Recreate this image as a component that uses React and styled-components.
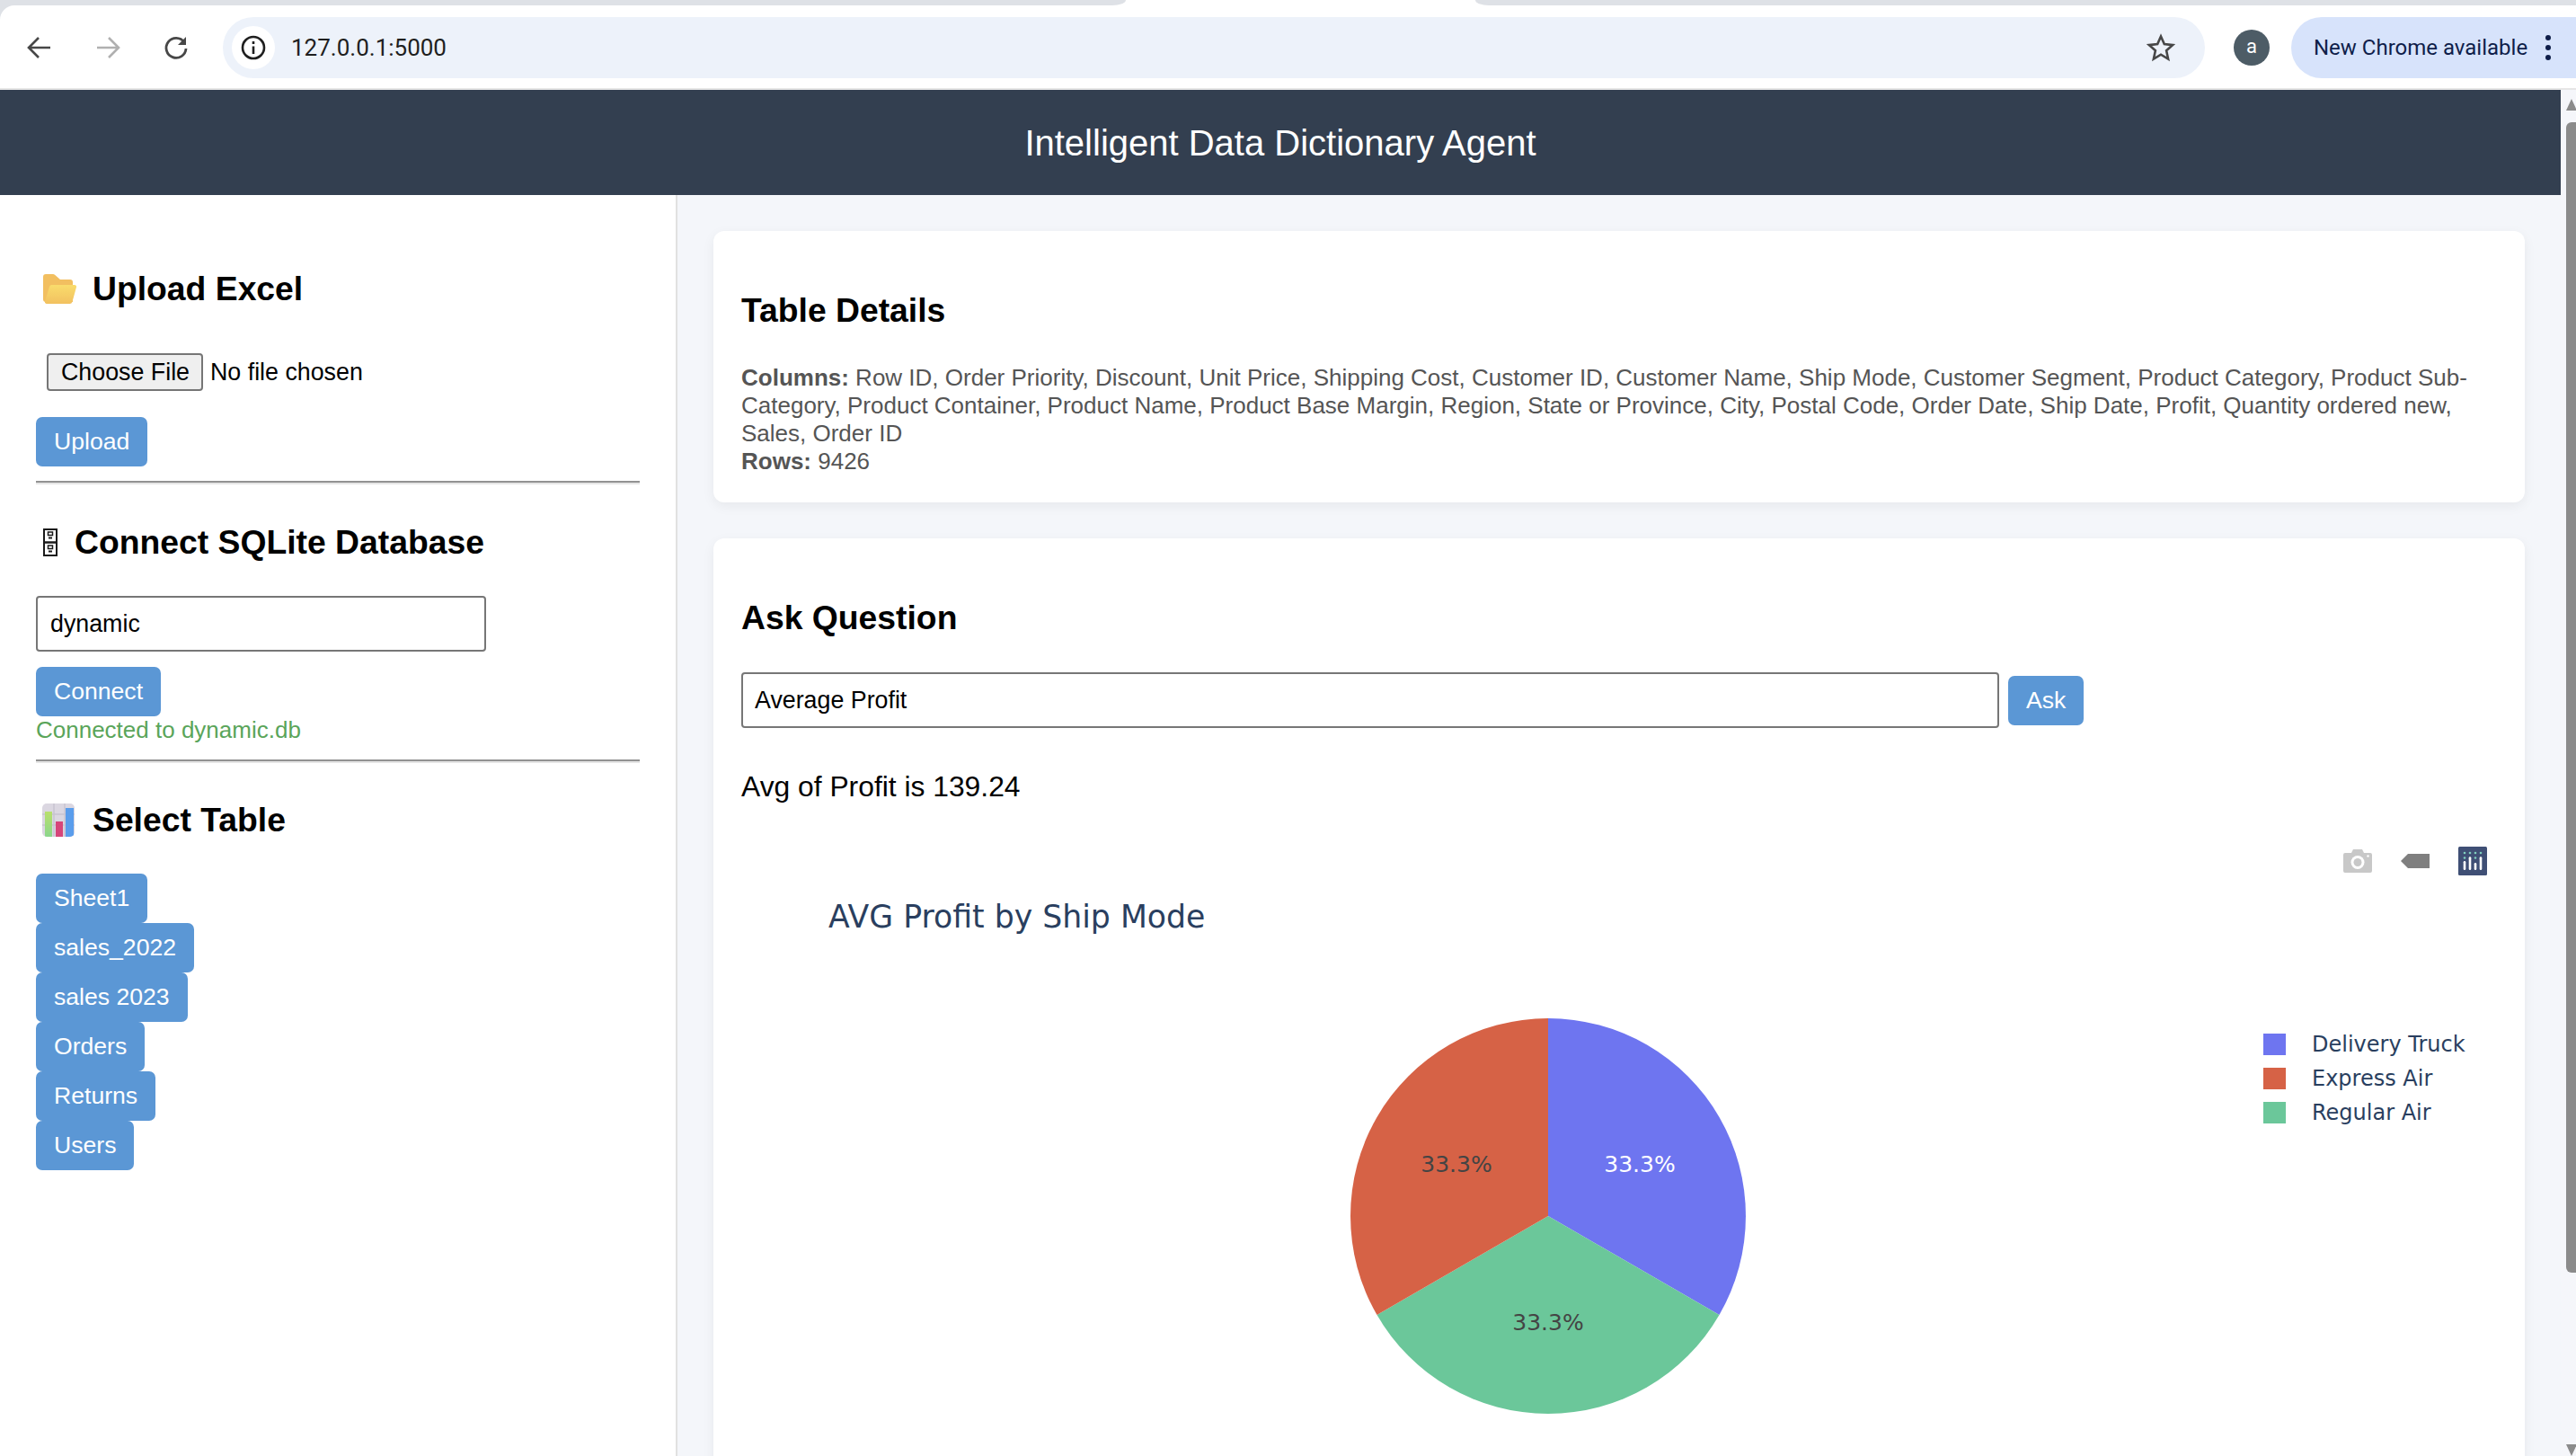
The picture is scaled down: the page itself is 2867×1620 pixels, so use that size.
import styled, { createGlobalStyle } from "styled-components";

const GlobalStyle = createGlobalStyle`
  html, body {
    margin: 0;
    height: 1620px;
    overflow: hidden;
    background: #fff;
    font-family: "Liberation Sans", Arial, sans-serif;
  }
  * { box-sizing: border-box; }
`;

const Browser = styled.div`
  width: 2867px;
  height: 1620px;
  overflow: hidden;
  display: flex;
  flex-direction: column;
  background: #dee1e6;
`;
const TabStrip = styled.div`
  height: 6px;
  flex: none;
  background: #fff;
  display: flex;
  justify-content: space-between;
`;
const TabGap = styled.div`
  width: ${(p) => p.$w}px;
  background: #dee1e6;
  border-bottom-left-radius: ${(p) => (p.$right ? "15px 6px" : "0")};
  border-bottom-right-radius: ${(p) => (p.$right ? "0" : "15px 6px")};
`;
const Toolbar = styled.div`
  height: 94px;
  flex: none;
  background: #fff;
  border-bottom: 2px solid #e6e6e6;
  padding: 12px 0 10px 6px;
  display: flex;
  align-items: center;
  border-top-left-radius: 16px;
`;
const NavButton = styled.div`
  width: 76px;
  flex: none;
  display: flex;
  justify-content: center;
  color: ${(p) => (p.$off ? "#b0b0b0" : "#474747")};
`;
const Omnibox = styled.div`
  margin-left: 14px;
  width: 2206px;
  height: 68px;
  flex: none;
  border-radius: 34px;
  background: #edf2fa;
  display: flex;
  align-items: center;
  padding: 0 33px 0 10px;
`;
const SiteInfo = styled.div`
  width: 48px;
  height: 48px;
  border-radius: 50%;
  background: #fff;
  display: flex;
  align-items: center;
  justify-content: center;
  color: #1f1f1f;
`;
const Url = styled.span`
  margin-left: 18px;
  font-family: Roboto, sans-serif;
  font-size: 26px;
  color: #1f1f1f;
  flex: 1;
`;
const Avatar = styled.div`
  width: 40px;
  height: 40px;
  flex: none;
  margin-left: 32px;
  border-radius: 50%;
  background: #4d5c66;
  color: #fff;
  font-family: Roboto, sans-serif;
  font-size: 22px;
  display: flex;
  align-items: center;
  justify-content: center;
  padding-bottom: 3px;
`;
const UpdatePill = styled.div`
  margin-left: 24px;
  flex: 1;
  height: 68px;
  border-radius: 34px 0 0 34px;
  background: #d7e3fb;
  color: #0f1e4a;
  font-family: Roboto, sans-serif;
  font-size: 24px;
  display: flex;
  align-items: center;
  padding-left: 25px;
  white-space: nowrap;
`;
const Dots = styled.span`
  margin-left: 20px;
  display: flex;
  flex-direction: column;
  gap: 5px;
  i {
    width: 6px;
    height: 6px;
    border-radius: 50%;
    background: #0f1e4a;
  }
`;
const Viewport = styled.div`
  flex: 1;
  min-height: 0;
  display: flex;
  background: #f4f6fa;
`;
const Page = styled.div`
  flex: 1;
  min-width: 0;
  display: flex;
  flex-direction: column;
`;
const Scrollbar = styled.div`
  width: 17px;
  flex: none;
  background: #f5f6fa;
  padding: 10px 0 0 6px;
  display: flex;
  flex-direction: column;
  align-items: stretch;
`;
const ScrollArrow = styled.div`
  flex: none;
  width: 0;
  height: 0;
  margin-top: ${(p) => (p.$down ? "auto" : "0")};
  border-left: 6px solid transparent;
  border-right: 6px solid transparent;
  border-bottom: ${(p) => (p.$down ? "0" : "13px solid #8b8b8b")};
  border-top: ${(p) => (p.$down ? "13px solid #8b8b8b" : "0")};
`;
const ScrollThumb = styled.div`
  margin-top: 13px;
  height: 1280px;
  background: #8b8b8b;
  border-radius: 6px 0 0 6px;
`;
const Banner = styled.header`
  height: 117px;
  flex: none;
  background: #333f50;
  color: #fff;
  font-size: 40px;
  display: flex;
  align-items: center;
  justify-content: center;
  padding-top: 1px;
`;
const Body = styled.div`
  flex: 1;
  min-height: 0;
  display: flex;
`;
const Sidebar = styled.aside`
  width: 754px;
  flex: none;
  background: #fff;
  border-right: 2px solid #e1e1e1;
  padding: 0 40px;
`;
const SideTitle = styled.h3`
  margin: 0;
  height: ${(p) => p.$h}px;
  padding-top: ${(p) => p.$pad}px;
  padding-left: ${(p) => p.$left}px;
  display: flex;
  align-items: center;
  gap: ${(p) => p.$gap}px;
  font-size: 37.3px;
  font-weight: 700;
  color: #000;
`;
const FileField = styled.input`
  display: block;
  margin: 0 0 29px 12px;
  font-family: "Liberation Sans", sans-serif;
  font-size: 26.8px;
  height: 42px;
  color: #000;
  &::file-selector-button {
    height: 42px;
    margin: 0 8px 0 0;
    padding: 0 13px 0 14px;
    font: inherit;
    background: #efefef;
    border: 2px solid #767676;
    border-radius: 4px;
    color: #000;
  }
`;
const ActionButton = styled.button`
  display: ${(p) => (p.$stack ? "block" : "inline-block")};
  height: 55px;
  padding: 0 20px;
  border: 0;
  border-radius: 7px;
  background: #5b97d5;
  color: #fff;
  font-family: "Liberation Sans", sans-serif;
  font-size: 26.6px;
`;
const Rule = styled.hr`
  margin: ${(p) => p.$top}px 0 0;
  height: 4px;
  border: 0;
  border-top: 2px solid #929292;
  border-bottom: 2px solid #e6e6e6;
`;
const TextBox = styled.input`
  display: block;
  flex: none;
  height: 62px;
  margin-bottom: ${(p) => p.$below || 0}px;
  padding: 0 ${(p) => p.$inset}px;
  border: 2px solid #767676;
  border-radius: 4px;
  background: #fff;
  color: #000;
  font-family: "Liberation Sans", sans-serif;
  font-size: 26.8px;
  width: ${(p) => p.$w}px;
`;
const StatusText = styled.div`
  height: 31px;
  line-height: 31px;
  color: #5aa55a;
  font-size: 26px;
`;
const TableList = styled.div`
  display: flex;
  flex-direction: column;
  align-items: flex-start;
`;
const Main = styled.main`
  flex: 1;
  min-width: 0;
  padding: 40px 40px 0;
  display: flex;
  flex-direction: column;
  gap: 40px;
`;
const Card = styled.section`
  flex: none;
  background: #fff;
  border-radius: 12px;
  box-shadow: 0 4px 14px rgba(0, 0, 0, 0.06);
  padding: 0 31px;
  height: ${(p) => p.$h}px;
`;
const CardTitle = styled.h3`
  margin: 0;
  padding-top: ${(p) => p.$top}px;
  height: ${(p) => p.$h}px;
  font-size: 37.3px;
  line-height: 44px;
  font-weight: 700;
  color: #000;
`;
const Details = styled.p`
  margin: 0;
  font-size: 26px;
  line-height: 31px;
  color: #555;
`;
const AskRow = styled.div`
  display: flex;
  align-items: center;
  gap: 10px;
`;
const Answer = styled.p`
  margin: 45px 0 0;
  font-size: 31.8px;
  line-height: 40px;
  color: #000;
`;
const Plot = styled.div`
  position: relative;
  margin: 24px 0 0 -31px;
  width: 2016px;
  height: 760px;
`;
const Modebar = styled.div`
  position: absolute;
  top: 23px;
  right: 42px;
  display: flex;
  align-items: center;
  gap: 32px;
`;

const slices = [
  { d: "M1723 1353 V1133 A220 220 0 0 1 1913.5 1463 Z", fill: "#6e75f0" },
  { d: "M1723 1353 L1913.5 1463 A220 220 0 0 1 1532.5 1463 Z", fill: "#6bc79a" },
  { d: "M1723 1353 L1532.5 1463 A220 220 0 0 1 1723 1133 Z", fill: "#d66246" },
];

const labels = [
  { x: 1825, y: 1304, color: "#fff" },
  { x: 1621, y: 1304, color: "#444" },
  { x: 1723, y: 1480, color: "#444" },
];

const legend = [
  { name: "Delivery Truck", y: 1150, fill: "#6e75f0" },
  { name: "Express Air", y: 1188, fill: "#d66246" },
  { name: "Regular Air", y: 1226, fill: "#6bc79a" },
];

const PieChart = () => (
  <svg width="2016" height="760" viewBox="794 919 2016 760" fontFamily="'DejaVu Sans', Verdana, sans-serif">
    <text x="922" y="1032" fontSize="34.7" fill="#2a3f5f">AVG Profit by Ship Mode</text>
    {slices.map((s) => (
      <path key={s.fill} d={s.d} fill={s.fill} />
    ))}
    {labels.map((l) => (
      <text key={l.x} x={l.x} y={l.y} fontSize="25" fill={l.color} textAnchor="middle">33.3%</text>
    ))}
    {legend.map((l) => (
      <g key={l.name}>
        <rect x="2519" y={l.y} width="25" height="24" fill={l.fill} />
        <text x="2573" y={l.y + 20} fontSize="24" fill="#2a3f5f">{l.name}</text>
      </g>
    ))}
  </svg>
);

const Camera = () => (
  <svg width="32" height="26" viewBox="0 0 32 26">
    <path d="M2 4h7l2-4h10l2 4h7a2 2 0 0 1 2 2v18a2 2 0 0 1-2 2H2a2 2 0 0 1-2-2V6a2 2 0 0 1 2-2z" fill="#c8c8c8" />
    <circle cx="16" cy="14.5" r="7.5" fill="#fff" />
    <circle cx="16" cy="14.5" r="4.5" fill="#c8c8c8" />
    <circle cx="27.5" cy="7.5" r="1.2" fill="#fff" />
  </svg>
);

const TagIcon = () => (
  <svg width="32" height="16" viewBox="0 0 32 16">
    <path d="M8 0h24v16H8L0 8z" fill="#7f7f7f" />
  </svg>
);

const PlotlyLogo = () => (
  <svg width="32" height="32" viewBox="0 0 32 32">
    <rect width="32" height="32" rx="1.5" fill="#3f4f75" />
    {[7, 13, 19, 25].map((x) => (
      <circle key={x} cx={x} cy="7" r="1.3" fill="#80cfbe" />
    ))}
    {[7, 19].map((x) => (
      <circle key={x} cx={x} cy="12.5" r="1.3" fill="#80cfbe" />
    ))}
    {[13, 25].map((x) => (
      <circle key={x} cx={x} cy="12.5" r="1.3" fill="#fff" />
    ))}
    <rect x="5.7" y="16" width="2.6" height="10" rx="1.3" fill="#fff" />
    <rect x="11.7" y="12" width="2.6" height="14" rx="1.3" fill="#fff" />
    <rect x="17.7" y="18" width="2.6" height="8" rx="1.3" fill="#fff" />
    <rect x="23.7" y="12" width="2.6" height="14" rx="1.3" fill="#fff" />
  </svg>
);

const FolderIcon = () => (
  <svg width="37" height="33" viewBox="0 0 37 33">
    <defs>
      <linearGradient id="folderFront" x1="0" y1="0" x2="0" y2="1">
        <stop offset="0" stopColor="#f9dc6c" />
        <stop offset="1" stopColor="#f2c160" />
      </linearGradient>
    </defs>
    <path d="M0 3a3 3 0 0 1 3-3h8a3 3 0 0 1 2 .8L19 6h11a3 3 0 0 1 3 3v22H3a3 3 0 0 1-3-3z" fill="#f2bf60" />
    <path d="M9.5 12H35a2 2 0 0 1 2 2.5l-4.6 16.5a3 3 0 0 1-2.9 2H4a2 2 0 0 1-2-2.5l5-16.5a2.6 2.6 0 0 1 2.5-2z" fill="url(#folderFront)" />
  </svg>
);

const DrawerIcon = () => (
  <svg width="16" height="31" viewBox="0 0 16 31" fill="none" stroke="#1a1a1a" strokeWidth="2">
    <rect x="1" y="1" width="14" height="29" fill="#fff" />
    <path d="M1 15.5h14" strokeWidth="2.5" />
    <rect x="5.5" y="4" width="5" height="3.5" strokeWidth="1.5" />
    <path d="M6 10.5h4" />
    <rect x="5.5" y="19" width="5" height="3.5" strokeWidth="1.5" />
    <path d="M6 25.5h4" />
  </svg>
);

const BarsIcon = () => (
  <svg width="36" height="37" viewBox="0 0 36 37">
    <defs>
      <linearGradient id="barGreen" x1="0" y1="0" x2="0" y2="1">
        <stop offset="0" stopColor="#b9e06c" />
        <stop offset="1" stopColor="#8bd68c" />
      </linearGradient>
      <clipPath id="barsClip">
        <rect width="36" height="37" rx="5" />
      </clipPath>
    </defs>
    <g clipPath="url(#barsClip)">
      <rect width="36" height="37" fill="#dbd7e1" />
      <path d="M0 12h36M0 24h36M13 0v37M25 0v37" stroke="#c8c4d0" strokeWidth="1.5" />
      <rect x="3" y="9" width="8" height="28" fill="url(#barGreen)" />
      <rect x="15" y="20" width="8" height="17" fill="#d6457a" />
      <rect x="26" y="5" width="9" height="32" fill="#5a9dec" />
    </g>
  </svg>
);

const tables = ["Sheet1", "sales_2022", "sales 2023", "Orders", "Returns", "Users"];

export default function App() {
  return (
    <Browser>
      <GlobalStyle />
      <TabStrip>
        <TabGap $w={1253} />
        <TabGap $w={1225} $right />
      </TabStrip>
      <Toolbar>
        <NavButton>
          <svg width="30" height="30" viewBox="0 0 30 30" fill="none" stroke="currentColor" strokeWidth="2.6">
            <path d="M27 15H3M14 4 3 15l11 11" />
          </svg>
        </NavButton>
        <NavButton $off>
          <svg width="30" height="30" viewBox="0 0 30 30" fill="none" stroke="currentColor" strokeWidth="2.6">
            <path d="M3 15h24M16 4l11 11-11 11" />
          </svg>
        </NavButton>
        <NavButton>
          <svg width="30" height="30" viewBox="0 0 30 30" fill="none" stroke="currentColor" strokeWidth="2.8">
            <path d="M24 9a11 11 0 1 0 2 7" />
            <path d="M26 3v9h-9z" fill="currentColor" stroke="none" />
          </svg>
        </NavButton>
        <Omnibox>
          <SiteInfo>
            <svg width="28" height="28" viewBox="0 0 28 28" fill="none" stroke="currentColor" strokeWidth="2.6">
              <circle cx="14" cy="14" r="12" />
              <path d="M14 12.5V21M14 7v3" />
            </svg>
          </SiteInfo>
          <Url>127.0.0.1:5000</Url>
          <svg width="32" height="32" viewBox="0 0 32 32" fill="none" stroke="#474747" strokeWidth="2.6">
            <path d="M16 3.5l3.8 8.6 9.2 1-6.9 6.2 2 9.2-8.1-4.8-8.1 4.8 2-9.2L3 13.1l9.2-1z" />
          </svg>
        </Omnibox>
        <Avatar>a</Avatar>
        <UpdatePill>
          New Chrome available
          <Dots>
            <i />
            <i />
            <i />
          </Dots>
        </UpdatePill>
      </Toolbar>
      <Viewport>
        <Page>
          <Banner>Intelligent Data Dictionary Agent</Banner>
          <Body>
            <Sidebar>
              <SideTitle $h={176} $pad={33} $left={8} $gap={18}>
                <FolderIcon /> Upload Excel
              </SideTitle>
              <FileField type="file" />
              <ActionButton $stack>Upload</ActionButton>
              <Rule $top={16} />
              <SideTitle $h={124} $pad={4} $left={8} $gap={19}>
                <DrawerIcon /> Connect SQLite Database
              </SideTitle>
              <TextBox $w={501} $below={17} $inset={14} defaultValue="dynamic" />
              <ActionButton $stack>Connect</ActionButton>
              <StatusText>Connected to dynamic.db</StatusText>
              <Rule $top={17} />
              <SideTitle $h={123} $pad={3} $left={7} $gap={20}>
                <BarsIcon /> Select Table
              </SideTitle>
              <TableList>
                {tables.map((t) => (
                  <ActionButton key={t}>{t}</ActionButton>
                ))}
              </TableList>
            </Sidebar>
            <Main>
              <Card $h={302}>
                <CardTitle $top={66} $h={148}>Table Details</CardTitle>
                <Details>
                  <b>Columns:</b> Row ID, Order Priority, Discount, Unit Price, Shipping Cost, Customer ID, Customer Name, Ship Mode, Customer Segment, Product Category, Product Sub-Category, Product Container, Product Name, Product Base Margin, Region, State or Province, City, Postal Code, Order Date, Ship Date, Profit, Quantity ordered new, Sales, Order ID
                  <br />
                  <b>Rows:</b> 9426
                </Details>
              </Card>
              <Card $h={1100}>
                <CardTitle $top={66} $h={149}>Ask Question</CardTitle>
                <AskRow>
                  <TextBox $w={1400} $inset={13} defaultValue="Average Profit" />
                  <ActionButton>Ask</ActionButton>
                </AskRow>
                <Answer>Avg of Profit is 139.24</Answer>
                <Plot>
                  <PieChart />
                  <Modebar>
                    <Camera />
                    <TagIcon />
                    <PlotlyLogo />
                  </Modebar>
                </Plot>
              </Card>
            </Main>
          </Body>
        </Page>
        <Scrollbar>
          <ScrollArrow />
          <ScrollThumb />
          <ScrollArrow $down />
        </Scrollbar>
      </Viewport>
    </Browser>
  );
}
